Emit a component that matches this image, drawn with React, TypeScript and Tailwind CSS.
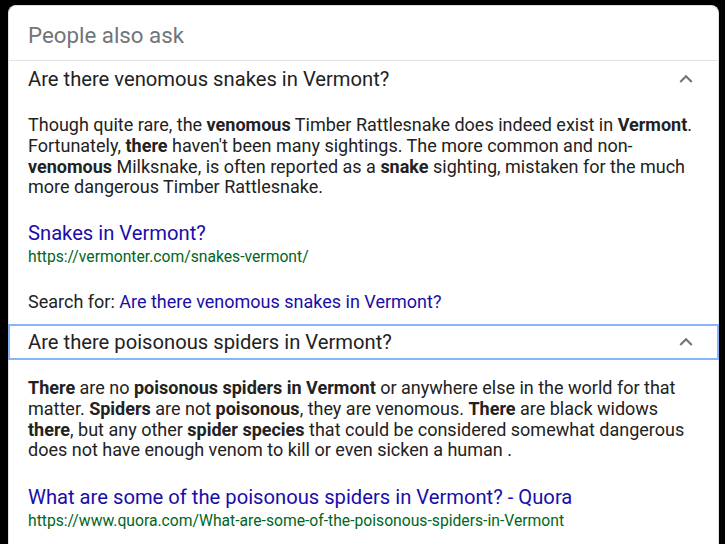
import React from "react";

function Chevron() {
  return (
    <svg width="26" height="26" viewBox="0 0 24 24" className="shrink-0">
      <path d="M12 8l-6 6 1.41 1.41L12 10.83l4.59 4.58L18 14z" fill="#70757a" />
    </svg>
  );
}

export default function App() {
  return (
    <div
      className="w-[725px] h-[544px] bg-black overflow-hidden pt-[5px] pl-[8px]"
      style={{ fontFamily: "Roboto, Arial, sans-serif" }}
    >
      <div className="w-[711px] h-[539px] bg-white border border-b-0 border-[#dfe1e5] rounded-t-lg text-[#222]">
        <div className="pt-[16px] pb-[12px] pl-[19px] border-b border-[#e3e3e3] text-[22.3px] leading-[26px] text-[#70757a]">
          People also ask
        </div>
        <div className="h-[36px] flex items-center justify-between pl-[19px] pr-[19px] text-[20.2px] leading-[24px]">
          <span>Are there venomous snakes in Vermont?</span>
          <Chevron />
        </div>
        <div className="pl-[19px] pr-[19px] pt-[18px]">
          <p className="text-[18px] leading-[20.75px]">
            Though quite rare, the <b>venomous</b> Timber Rattlesnake does indeed exist in <b>Vermont</b>.
            Fortunately, <b>there</b> haven't been many sightings. The more common and non-
            <b>venomous</b> Milksnake, is often reported as a <b>snake</b> sighting, mistaken for the much
            more dangerous Timber Rattlesnake.
          </p>
          <div className="mt-[23px] text-[20.2px] leading-[24px] text-[#1a0dab]">Snakes in Vermont?</div>
          <div className="mt-[2px] text-[15.7px] leading-[20px] text-[#006621]">
            https://vermonter.com/snakes-vermont/
          </div>
          <div className="mt-[24px] text-[18px] leading-[21px]">
            Search for: <span className="text-[#1a0dab]">Are there venomous snakes in Vermont?</span>
          </div>
        </div>
        <div className="mt-[12px] -mx-px h-[36px] border-2 border-[#8ab4f8] flex items-center justify-between pl-[18px] pr-[18px] text-[20.2px] leading-[24px]">
          <span>Are there poisonous spiders in Vermont?</span>
          <Chevron />
        </div>
        <div className="pl-[19px] pr-[19px] pt-[18px]">
          <p className="text-[18px] leading-[20.75px]">
            <b>There</b> are no <b>poisonous spiders in Vermont</b> or anywhere else in the world for that
            matter. <b>Spiders</b> are not <b>poisonous</b>, they are venomous. <b>There</b> are black widows{" "}
            <b>there</b>, but any other <b>spider species</b> that could be considered somewhat dangerous
            does not have enough venom to kill or even sicken a human .
          </p>
          <div className="mt-[24px] text-[20.2px] leading-[24px] text-[#1a0dab]">
            What are some of the poisonous spiders in Vermont? - Quora
          </div>
          <div className="mt-[2px] text-[15.7px] leading-[20px] text-[#006621]">
            https://www.quora.com/What-are-some-of-the-poisonous-spiders-in-Vermont
          </div>
        </div>
      </div>
    </div>
  );
}
